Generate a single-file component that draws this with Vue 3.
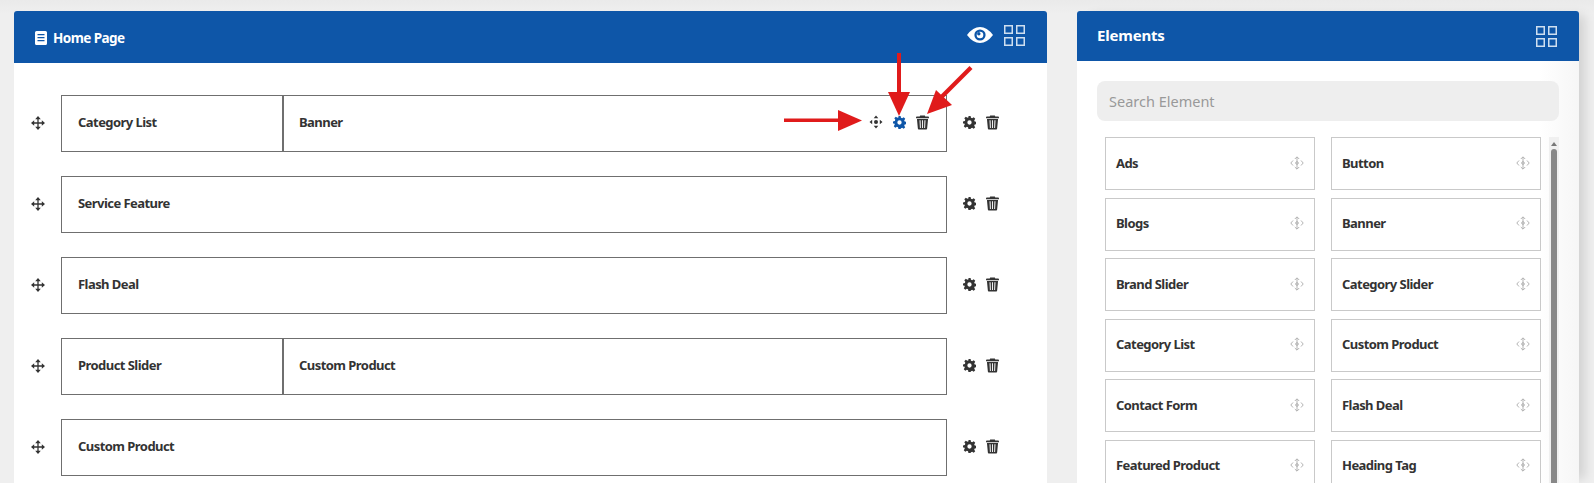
<script setup>
const rows = [
  ['Category List', 'Banner'],
  ['Service Feature'],
  ['Flash Deal'],
  ['Product Slider', 'Custom Product'],
  ['Custom Product'],
]
const elements = ['Ads','Button','Blogs','Banner','Brand Slider','Category Slider','Category List','Custom Product','Contact Form','Flash Deal','Featured Product','Heading Tag']
</script>

<template>
  <div class="page">
    <section class="panel left">
      <header class="head head-left">
        <h2 class="title-left">
          <svg class="doc" viewBox="0 0 12 14"><path fill="#fff" fill-rule="evenodd" d="M0 1.500Q0 0 1.500 0h9Q12 0 12 1.500v11q0 1.500-1.500 1.500h-9Q0 14 0 12.500zM2.500 3v1.300h7V3zm0 3v1.300h7V6zm0 3v1.300h7V9z"/></svg>
          Home Page
        </h2>
        <div class="head-icons">
          <svg class="eye" viewBox="0 0 26 16"><path fill="#fff" d="M0 8Q6 0 13 0t13 8q-6 8-13 8T0 8z"/><circle cx="13" cy="8" r="5.600" fill="#0e56a8"/><circle cx="13" cy="8" r="3.300" fill="#fff"/><circle cx="11.800" cy="6.800" r="1.700" fill="#0e56a8"/></svg>
          <svg class="grid-ic" viewBox="0 0 21 21"><g fill="none" stroke="#cfdff0" stroke-width="1.500"><rect x=".75" y=".75" width="7.500" height="7.500"/><rect x="12.750" y=".75" width="7.500" height="7.500"/><rect x=".75" y="12.750" width="7.500" height="7.500"/><rect x="12.750" y="12.750" width="7.500" height="7.500"/></g></svg>
        </div>
      </header>
      <div class="rows">
        <div v-for="(row, i) in rows" :key="i" class="row">
          <span class="handle">
            <svg viewBox="0 0 14 14" class="move"><path fill="none" stroke="#333" stroke-width="1.300" d="M7 1v12M1 7h12"/><path fill="#333" d="M7 0l2.800 3.200H4.200zM7 14l2.800-3.200H4.200zM0 7l3.200-2.800v5.600zM14 7l-3.200-2.800v5.600z"/></svg>
          </span>
          <div class="box">
            <div v-for="(cell, j) in row" :key="j" class="cell" :class="{ first: row.length > 1 && j === 0, second: j === 1 }">
              <span>{{ cell }}</span>
              <div v-if="i === 0 && j === 1" class="cell-tools">
                <svg viewBox="0 0 14 14" class="move"><circle cx="7" cy="7" r="2" fill="#333"/><path fill="#333" d="M7 .5l2.300 2.700H4.700zM7 13.500l2.300-2.700H4.700zM.5 7l2.700-2.300v4.600zM13.500 7l-2.700-2.300v4.600z"/></svg>
                <svg viewBox="0 0 24 24" class="gear"><path fill="#0e56a8" fill-rule="evenodd" d="M10 0h4l.7 3.400 2.200.9 2.900-1.900 2.800 2.800-1.900 2.900.9 2.200 3.400.7v4l-3.400.7-.9 2.200 1.900 2.900-2.800 2.800-2.900-1.900-2.200.9L14 24h-4l-.7-3.400-2.200-.9-2.900 1.900-2.800-2.800 1.900-2.900-.9-2.200L0 14v-4l3.400-.7.900-2.200-1.900-2.900 2.800-2.800 2.900 1.900 2.200-.9zM12 8a4 4 0 1 0 0 8 4 4 0 0 0 0-8z"/></svg>
                <svg viewBox="0 0 14 15" class="trash"><path fill="#333" fill-rule="evenodd" d="M4.500 0h5l.5 1H13q1 0 1 1v.8H0V2q0-1 1-1h3zM1 3.600h12l-1 10.400q0 1-1 1H3q-1 0-1-1zM3.800 5l.4 8.400h1L4.900 5zM6.500 5v8.400h1V5zM9.100 5l-.3 8.400h1L10.200 5z"/></svg>
              </div>
            </div>
          </div>
          <div class="actions">
            <svg viewBox="0 0 24 24" class="gear"><path fill="#333" fill-rule="evenodd" d="M10 0h4l.7 3.400 2.200.9 2.900-1.900 2.800 2.800-1.900 2.900.9 2.200 3.400.7v4l-3.400.7-.9 2.200 1.900 2.900-2.800 2.800-2.900-1.900-2.200.9L14 24h-4l-.7-3.400-2.200-.9-2.900 1.900-2.800-2.800 1.900-2.900-.9-2.200L0 14v-4l3.400-.7.900-2.200-1.900-2.900 2.800-2.800 2.900 1.900 2.200-.9zM12 8a4 4 0 1 0 0 8 4 4 0 0 0 0-8z"/></svg>
            <svg viewBox="0 0 14 15" class="trash"><path fill="#333" fill-rule="evenodd" d="M4.500 0h5l.5 1H13q1 0 1 1v.8H0V2q0-1 1-1h3zM1 3.600h12l-1 10.400q0 1-1 1H3q-1 0-1-1zM3.800 5l.4 8.400h1L4.900 5zM6.500 5v8.400h1V5zM9.100 5l-.3 8.400h1L10.200 5z"/></svg>
          </div>
        </div>
      </div>
      <svg class="arrows" viewBox="0 0 1033 160" width="1033" height="160">
        <g fill="#e01b1b" stroke="none">
          <path d="M770 107.500h54v3.500h-54z"/><path d="M824 99l24 10.500-24 10.500z"/>
          <path d="M883 42h4v42h-4z"/><path d="M874 81h22l-11 24z"/>
          <path d="M955.500 55l3 3-33 33-3-3z"/><path d="M913 103l9-24 16 15z"/>
        </g>
      </svg>
    </section>

    <section class="panel right">
      <header class="head head-right">
        <h2 class="title-right">Elements</h2>
        <svg class="grid-ic" viewBox="0 0 21 21"><g fill="none" stroke="#cfdff0" stroke-width="1.500"><rect x=".75" y=".75" width="7.500" height="7.500"/><rect x="12.750" y=".75" width="7.500" height="7.500"/><rect x=".75" y="12.750" width="7.500" height="7.500"/><rect x="12.750" y="12.750" width="7.500" height="7.500"/></g></svg>
      </header>
      <div class="right-body">
        <input class="search" placeholder="Search Element" />
        <div class="list-wrap">
          <div class="cards">
            <div v-for="el in elements" :key="el" class="card">
              <span>{{ el }}</span>
              <svg viewBox="0 0 14 14" class="drag"><g fill="none" stroke="#aaa" stroke-width=".9"><path d="M3 4.500L.8 7 3 9.500M11 4.500L13.200 7 11 9.500M7 1v12M4.800 3L7 .8 9.200 3M4.800 11L7 13.200 9.200 11"/><circle cx="7" cy="7" r="1.300"/></g></svg>
            </div>
          </div>
          <div class="scrollbar">
            <i class="up"></i>
            <i class="thumb"></i>
          </div>
        </div>
      </div>
    </section>
  </div>
</template>

<style>
html, body { margin: 0; background: #efefef; overflow: hidden; }
</style>

<style scoped>
.page {
  width: 1594px;
  height: 483px;
  box-sizing: border-box;
  padding: 11px 15px 0 14px;
  display: flex;
  gap: 30px;
  overflow: hidden;
  background: linear-gradient(#eaeaea, #efefef 14px);
  font-family: "Noto Sans", "Liberation Sans", sans-serif;
  color: #333;
}
.panel {
  background: #fff;
  border-radius: 3px 3px 0 0;
  height: 472px;
  overflow: hidden;
  position: relative;
}
.left { width: 1033px; flex: none; }
.right {
  width: 502px;
  flex: none;
  background: linear-gradient(90deg, #fff 92%, #f6f6f6);
  box-shadow: 10px 0 10px -4px rgba(0,0,0,.12);
  overflow: visible;
}
.head {
  display: flex;
  align-items: center;
  justify-content: space-between;
  background: #0e56a8;
  color: #fff;
  box-sizing: border-box;
}
.head-left { height: 52px; padding: 0 22px 0 21px; }
.head-right { height: 50px; padding: 0 22px 0 20px; border-radius: 3px 3px 0 0; }
.title-left {
  margin: 0;
  font-size: 13.500px;
  font-weight: 700;
  display: flex;
  align-items: center;
  gap: 6px;
  padding-top: 1px;
  letter-spacing: -.55px;
}
.title-right { margin: 0 0 2px; font-size: 15px; font-weight: 700; letter-spacing: -.2px; }
.doc { width: 12px; height: 14px; }
.head-icons { display: flex; align-items: center; gap: 11px; margin-top: -4px; }
.eye { width: 26px; height: 16px; }
.grid-ic { width: 21px; height: 21px; display: block; }
.rows {
  padding: 32px 0 0 0;
  display: flex;
  flex-direction: column;
  gap: 24px;
}
.row { display: flex; align-items: center; height: 57px; flex: none; }
.handle { width: 47px; padding: 0 0 2px 1px; box-sizing: border-box; display: flex; justify-content: center; flex: none; }
.move { width: 14px; height: 14px; display: block; }
.box {
  width: 886px;
  height: 57px;
  box-sizing: border-box;
  border: 1px solid #6f6f6f;
  display: flex;
  flex: none;
}
.cell {
  flex: 1;
  display: flex;
  align-items: center;
  justify-content: space-between;
  padding: 0 17px 3px 16px;
  font-size: 13px;
  font-weight: 700;
  letter-spacing: -.55px;
  min-width: 0;
}
.cell.first {
  flex: 0 0 222px;
  box-sizing: border-box;
  border-right: 2px solid #6f6f6f;
}
.cell.second { padding-left: 15px; }
.cell-tools { display: flex; align-items: center; gap: 10px; }
.gear { width: 13px; height: 13px; display: block; }
.trash { width: 13px; height: 15px; display: block; }
.actions { display: flex; align-items: center; gap: 10px; margin: 0 0 2px 16px; }
.arrows { position: absolute; left: 0; top: 0; pointer-events: none; }
.right-body { padding: 20px 20px 0 20px; }
.search {
  display: block;
  width: 100%;
  height: 40px;
  box-sizing: border-box;
  background: #eee;
  border: 0;
  border-radius: 8px;
  padding: 0 12px;
  font-family: inherit;
  font-size: 14.500px;
  outline: none;
}
.search::placeholder { color: #999; opacity: 1; }
.list-wrap { display: flex; margin-top: 16px; padding-left: 8px; justify-content: space-between; }
.cards {
  width: 436px;
  display: grid;
  grid-template-columns: 210px 210px;
  column-gap: 16px;
  grid-auto-rows: 53px;
  row-gap: 7.500px;
}
.card {
  border: 1px solid #c9c9c9;
  box-sizing: border-box;
  display: flex;
  align-items: center;
  justify-content: space-between;
  padding: 0 10px 2px 10px;
  font-size: 13px;
  font-weight: 700;
  letter-spacing: -.55px;
}
.drag { width: 14px; height: 14px; display: block; }
.scrollbar {
  width: 10px;
  background: #f0f0f0;
  height: 400px;
  display: flex;
  flex-direction: column;
  align-items: center;
  padding-top: 5px;
  box-sizing: border-box;
}
.up {
  width: 0;
  height: 0;
  border-left: 3px solid transparent;
  border-right: 3px solid transparent;
  border-bottom: 4px solid #777;
}
.thumb {
  width: 6px;
  flex: 1;
  margin-top: 3px;
  background: #888;
  border-radius: 3px 3px 0 0;
}
</style>
